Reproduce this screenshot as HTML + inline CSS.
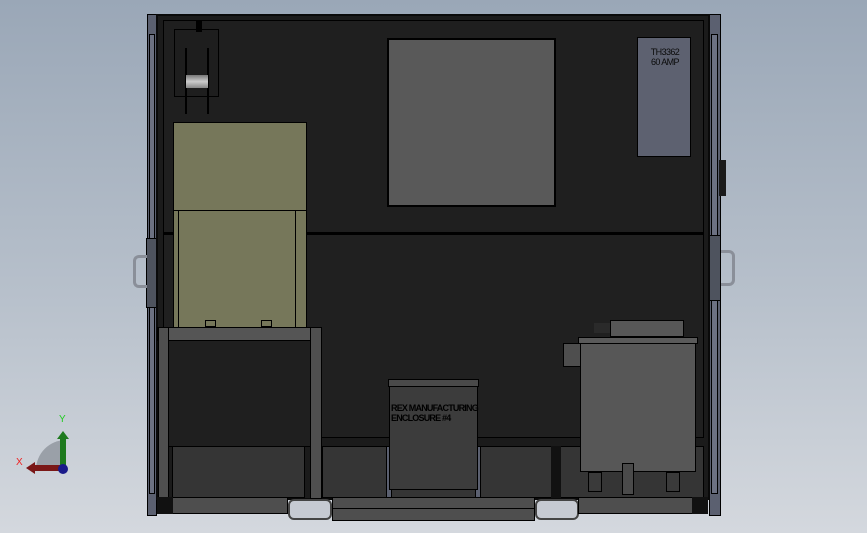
<!DOCTYPE html>
<html><head><style>
body{margin:0;width:867px;height:533px;overflow:hidden;background:linear-gradient(#9aa7b7 0%,#b7c0cb 55%,#d4d8de 100%);position:relative;font-family:"Liberation Sans",sans-serif}
div{position:absolute;box-sizing:border-box}
.b{border:1px solid #000}
</style></head><body>
<div class="b" style="left:147px;top:14px;width:10px;height:502px;background:#5b6070"></div>
<div class="b" style="left:149px;top:34px;width:6px;height:460px;background:#6c7182"></div>
<div class="b" style="left:146px;top:238px;width:12px;height:70px;background:#4e535e"></div>
<div style="left:133px;top:255px;width:14px;height:33px;border:3px solid #8a8f99;border-right:none;border-radius:6px 0 0 6px"></div>
<div class="b" style="left:709px;top:14px;width:12px;height:502px;background:#5b6070"></div>
<div class="b" style="left:711px;top:34px;width:7px;height:460px;background:#6c7182"></div>
<div class="b" style="left:709px;top:235px;width:12px;height:66px;background:#4e535e"></div>
<div style="left:721px;top:250px;width:14px;height:36px;border:3px solid #8a8f99;border-left:none;border-radius:0 6px 6px 0"></div>
<div style="left:719px;top:160px;width:7px;height:36px;background:#1a1a1a"></div>
<div style="left:156px;top:14px;width:554px;height:486px;background:#1b1b1b;border:2px solid #0a0a0a"></div>
<div style="left:163px;top:20px;width:541px;height:418px;border:1px solid #000;background:#1f1f1f"></div>
<div style="left:163px;top:232px;width:541px;height:2px;background:#000"></div>
<div style="left:163px;top:234px;width:541px;height:204px;background:#202020;border:1px solid #000"></div>
<div style="left:387px;top:38px;width:169px;height:169px;background:#595959;border:2px solid #000"></div>
<div class="b" style="left:637px;top:37px;width:54px;height:120px;background:#5d6170"></div>
<div style="left:640px;top:47px;width:50px;font-size:9px;line-height:10px;text-align:center;color:#0a0a0a;letter-spacing:-0.6px">TH3362<br>60 AMP</div>
<div class="b" style="left:174px;top:29px;width:45px;height:68px;background:#1e1e1e"></div>
<div style="left:185px;top:48px;width:2px;height:66px;background:#000"></div>
<div style="left:207px;top:48px;width:2px;height:66px;background:#000"></div>
<div style="left:186px;top:75px;width:22px;height:13px;background:linear-gradient(#777,#ccc,#888)"></div>
<div style="left:196px;top:20px;width:6px;height:12px;background:#000"></div>
<div class="b" style="left:173px;top:122px;width:134px;height:89px;background:#76775a"></div>
<div class="b" style="left:173px;top:210px;width:134px;height:118px;background:#76775a"></div>
<div style="left:178px;top:210px;width:118px;height:118px;border-left:1px solid #000;border-right:1px solid #000"></div>
<div class="b" style="left:205px;top:320px;width:11px;height:7px;background:#76775a"></div>
<div class="b" style="left:261px;top:320px;width:11px;height:7px;background:#76775a"></div>
<div class="b" style="left:157px;top:327px;width:165px;height:14px;background:#555"></div>
<div style="left:169px;top:341px;width:141px;height:106px;background:#1f1f1f;border-bottom:1px solid #000"></div>
<div class="b" style="left:158px;top:327px;width:11px;height:172px;background:#4f4f4f"></div>
<div class="b" style="left:310px;top:327px;width:12px;height:172px;background:#4f4f4f"></div>
<div class="b" style="left:172px;top:446px;width:133px;height:52px;background:#353535"></div>
<div class="b" style="left:322px;top:446px;width:382px;height:52px;background:#353535"></div>
<div style="left:551px;top:446px;width:10px;height:52px;background:#111"></div>
<div class="b" style="left:386px;top:446px;width:6px;height:52px;background:#5b6070"></div>
<div class="b" style="left:475px;top:446px;width:6px;height:52px;background:#5b6070"></div>
<div class="b" style="left:388px;top:379px;width:91px;height:8px;background:#4a4a4a"></div>
<div class="b" style="left:389px;top:386px;width:89px;height:104px;background:#3c3c3c"></div>
<div style="left:391px;top:403px;font-size:9px;line-height:10px;color:#000;letter-spacing:-0.8px;white-space:nowrap;font-weight:bold">REX MANUFACTURING<br>ENCLOSURE #4</div>
<div class="b" style="left:610px;top:320px;width:74px;height:17px;background:#575757"></div>
<div style="left:594px;top:323px;width:16px;height:10px;background:#2a2a2a"></div>
<div class="b" style="left:578px;top:337px;width:120px;height:7px;background:#5a5a5a"></div>
<div class="b" style="left:563px;top:343px;width:18px;height:24px;background:#4e4e4e"></div>
<div class="b" style="left:580px;top:343px;width:116px;height:129px;background:#575757"></div>
<div class="b" style="left:588px;top:472px;width:14px;height:20px;background:#3a3a3a"></div>
<div class="b" style="left:666px;top:472px;width:14px;height:20px;background:#3a3a3a"></div>
<div class="b" style="left:622px;top:463px;width:12px;height:32px;background:#4a4a4a"></div>
<div class="b" style="left:157px;top:497px;width:131px;height:17px;background:#4e4e4e"></div>
<div style="left:157px;top:497px;width:16px;height:17px;background:#111"></div>
<div style="left:288px;top:499px;width:44px;height:21px;background:#c6cad2;border:2px solid #444;border-radius:6px"></div>
<div class="b" style="left:332px;top:497px;width:203px;height:24px;background:#4e4e4e"></div>
<div style="left:332px;top:508px;width:203px;height:1px;background:#000"></div>
<div style="left:535px;top:499px;width:44px;height:21px;background:#c6cad2;border:2px solid #444;border-radius:6px"></div>
<div class="b" style="left:578px;top:497px;width:128px;height:17px;background:#4e4e4e"></div>
<div style="left:692px;top:497px;width:16px;height:17px;background:#111"></div>
<div style="left:36px;top:440px;width:60px;height:60px;border-radius:50%;background:#9aa0a8;clip-path:inset(0 30px 30px 0)"></div>
<div style="left:60px;top:438px;width:6px;height:32px;background:#1e7a1e"></div>
<div style="left:57px;top:431px;width:0;height:0;border-left:6px solid transparent;border-right:6px solid transparent;border-bottom:8px solid #1e7a1e"></div>
<div style="left:34px;top:465px;width:30px;height:6px;background:#7a1717"></div>
<div style="left:26px;top:462px;width:0;height:0;border-top:6px solid transparent;border-bottom:6px solid transparent;border-right:9px solid #7a1717"></div>
<div style="left:58px;top:464px;width:10px;height:10px;border-radius:50%;background:#1a1a8a"></div>
<div style="left:59px;top:414px;font-size:10px;color:#2c2">Y</div>
<div style="left:16px;top:457px;font-size:10px;color:#e22">X</div>
</body></html>
